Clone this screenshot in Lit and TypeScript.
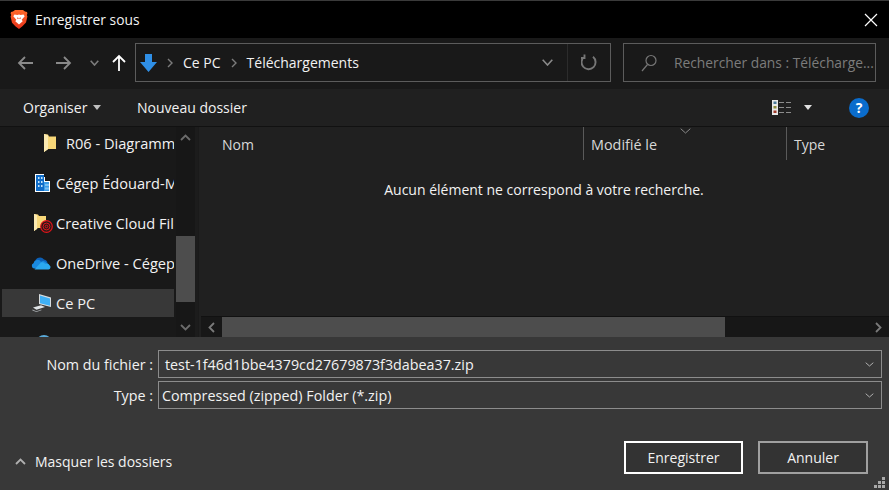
import { LitElement, html, css } from "lit";
import { customElement } from "lit/decorators.js";

const chev = (w = 11, h = 6, c = "#8a8a8a", sw = 1.4) => html`<svg width=${w} height=${h} viewBox="0 0 ${w} ${h}"><path d="M.7 .7L${w / 2} ${h - 1}L${w - 0.7} .7" fill="none" stroke=${c} stroke-width=${sw}/></svg>`;

const brave = html`<svg width="18" height="21" viewBox="0 0 18 21"><defs><linearGradient id="b" x1="0" y1="0" x2="0" y2="1"><stop offset="0" stop-color="#ff6a2a"/><stop offset="1" stop-color="#e5301a"/></linearGradient></defs><path d="M5 1h8l2 1.600 2 .4.4 1.400-.6 1.600.6 1.600-1.400 6-3.600 3.600L9 20 5.600 17.500 2 13.700.6 7.600 1.200 6 .6 4.400 1 3l2-.4z" fill="url(#b)"/><path d="M4.500 5.500l3 .5 1.500-.6 1.500.6 3-.5 1.200 1.800-3 3.500 1 1.400-3.700 3.300-3.700-3.300 1-1.400-3-3.500z" fill="#fff"/><path d="M7 9l1.600.4M11 9l-1.600.4" stroke="#f04a22" stroke-width="1"/></svg>`;

const folder = html`<svg width="12" height="18" viewBox="0 0 12 18"><path d="M0 0l4 .6 1 2h7V15H4l-4 3z" fill="#f7d778"/><path d="M0 0l4 1.200v14L0 18z" fill="#fbe9b0"/></svg>`;

const building = html`<svg width="15" height="18" viewBox="0 0 15 18"><path d="M0 0h9v3h1v4h5v11H0z" fill="#fff"/><path d="M1 1h8v16H1z" fill="#0f6cc8"/><path d="M9 8h5v9H9z" fill="#3b9de8"/><g fill="#bfe2fa"><path d="M3 3h1.500v2H3zM6 3h1.500v2H6zM3 7h1.500v2H3zM6 7h1.500v2H6zM3 11h1.500v2H3zM6 11h1.500v2H6zM10.500 10h1v2h-1zM12.500 10h1v2h-1zM10.500 13.500h1v2h-1zM12.500 13.500h1v2h-1z"/></g></svg>`;

const cc = html`<svg width="19" height="19" viewBox="0 0 19 19"><path d="M0 0l4 .5L5 2h7v12H4l-4 3z" fill="#f7d778"/><path d="M0 0l3 1v14l-3 2z" fill="#fbe9b0"/><circle cx="12.500" cy="12.500" r="5.800" fill="#2a1a18" stroke="#e0141a" stroke-width="1.200"/><circle cx="12.500" cy="12.500" r="3.400" fill="none" stroke="#e0141a"/><circle cx="12.500" cy="12.500" r="1.300" fill="none" stroke="#e0141a"/></svg>`;

const cloud = html`<svg width="20" height="13" viewBox="0 0 20 13"><path d="M4 5a5 5 0 0 1 9-2.500A4 4 0 0 1 16.500 7H5z" fill="#0c5fb5"/><path d="M2.500 6.200A4 4 0 0 1 10 5a3.500 3.500 0 0 1 5.500 1L9 11.500H3A2.800 2.800 0 0 1 2.500 6.200z" fill="#1a8ae0"/><path d="M9 6.500a3 3 0 0 1 5 .3 3 3 0 0 1 4.500 1.500 2.300 2.300 0 0 1 -1 4.200H3.500z" fill="#2ba8ef"/></svg>`;

const pc = html`<svg width="20" height="18" viewBox="0 0 20 18"><path d="M7 0l12 3.500v9.500L7 10z" fill="#d8dde0"/><path d="M8 1.400l10 3v7.300L8 9.200z" fill="#3fb0f5"/><path d="M1 13.500l8-2.200 4 1.600-8.500 2.800z" fill="#dfe3e6"/><path d="M.4 15.500l4 1.800 5-1.800v.8l-5 1.700-4-1.600z" fill="#a8acb0"/></svg>`;

const globe = html`<svg width="16" height="16" viewBox="0 0 16 16"><circle cx="8" cy="8" r="8" fill="#5aa9d8"/><path d="M3 2c3 1 6-1 9 1-1 2-3 1-4 3-2 0-4-1-5-4z" fill="#d4e8f2"/></svg>`;

const viewIcon = html`<svg width="19" height="15" viewBox="0 0 19 15"><path d="M0 0h6v15H0z" fill="#e8e8e8"/><path d="M1.500 1.500h3v2.500h-3z" fill="#4a7a9a"/><path d="M1.500 6h3v2.500h-3z" fill="#8a8a3a"/><path d="M1.500 10.500h3v2.500h-3z" fill="#a03a2a"/><path d="M7 2.500h5M14 2.500h5M7 7.500h5M14 7.500h5M7 12.500h5M14 12.500h5" stroke="#8c8c8c" stroke-width="1"/></svg>`;

const rows: [unknown, string, boolean, number, number][] = [
  [folder, "R06 - Diagramme", false, 44, 66],
  [building, "Cégep Édouard-Montpetit", false, 35, 56],
  [cc, "Creative Cloud Files", false, 34, 56],
  [cloud, "OneDrive - Cégep", false, 31, 56],
  [pc, "Ce PC", true, 32, 56],
  [globe, "Réseau", false, 36, 56],
];

@customElement("app-root")
export class AppRoot extends LitElement {
  static styles = css`
    :host { display: block; width: 889px; height: 490px; overflow: hidden; }
    * { box-sizing: border-box; }
    svg { flex: none; }
    .win { width: 889px; height: 490px; display: flex; flex-direction: column; font-family: "Open Sans", "Noto Sans", sans-serif; font-size: 14px; color: #f2f2f2; background: #383838; }
    .title { height: 38px; flex: none; background: #000; border-top: 1px solid #3a3a3a; display: flex; align-items: center; padding: 0 11px 0 10px; }
    .title .t { margin-left: 7px; flex: 1; font-size: 13.800px; }
    .nav { height: 51px; flex: none; background: #191919; display: flex; align-items: center; padding: 0 13px 2px 16px; }
    .navbtn { display: flex; align-items: center; justify-content: center; flex: none; }
    .navbtn.back { width: 19px; }
    .navbtn.fwd { width: 19px; margin-left: 19px; }
    .navbtn.dd { width: 13px; margin-left: 14.500px; }
    .navbtn.up { width: 16px; margin-left: 10.500px; }
    .crumb { width: 476px; height: 39px; margin-left: 8px; border: 1px solid #5c5c5c; display: flex; align-items: center; background: #191919; }
    .crumb .dl { margin-left: 4px; }
    .sep { margin: 0 10px; display: flex; }
    .crumb .grow { flex: 1; }
    .divider { width: 1px; height: 37px; background: #2c2c2c; margin-left: 14px; }
    .refresh { width: 42px; display: flex; justify-content: center; }
    .search { width: 253px; height: 39px; margin-left: 12px; border: 1px solid #5c5c5c; display: flex; align-items: center; padding-left: 17px; color: #7c7c7c; white-space: nowrap; overflow: hidden; }
    .search span { margin-left: 17px; font-size: 13.800px; }
    .tools { height: 38px; flex: none; background: #202020; border-bottom: 1px solid #111; display: flex; align-items: center; padding: 0 20px 0 23px; }
    .org { display: flex; align-items: center; gap: 6px; width: 114px; }
    .grow { flex: 1; }
    .caret { width: 0; height: 0; border-left: 4.500px solid transparent; border-right: 4.500px solid transparent; border-top: 5px solid #c0c0c0; display: block; }
    .tools .caret.v { margin: 0 37px 0 13px; border-top-color: #e0e0e0; }
    .help { width: 20px; height: 20px; border-radius: 50%; background: #0a6ccc; color: #fff; font-size: 14px; font-weight: 700; display: flex; align-items: center; justify-content: center; line-height: 1; }
    .main { height: 210px; flex: none; display: flex; background: #202020; }
    .side { width: 198px; flex: none; display: flex; background: #191919; border-right: 3px solid #1c1c1c; }
    .tree { width: 176px; flex: none; padding: 2px 0 0 2px; display: flex; flex-direction: column; gap: 12px; overflow: hidden; height: 210px; font-size: 14.600px; }
    .row { height: 28px; width: 172px; flex: none; display: flex; align-items: center; white-space: nowrap; overflow: hidden; }
    .row.sel { background: #383838; }
    .row .ic { flex: none; display: flex; align-items: center; justify-content: flex-start; }
    .row .lbl { overflow: hidden; }
    .vbar { width: 19px; flex: none; display: flex; flex-direction: column; align-items: center; background: #171717; }
    .vbar .up { height: 109px; flex: none; display: flex; align-items: flex-start; justify-content: center; padding-top: 7px; width: 100%; }
    .vbar .thumb { height: 66px; width: 100%; flex: none; background: #4d4d4d; }
    .vbar .dn { flex: 1; display: flex; align-items: center; justify-content: center; padding-top: 15px; }
    .content { flex: 1; display: flex; flex-direction: column; min-width: 0; border-left: 1px solid #1a1a1a; }
    .head { height: 33px; flex: none; display: flex; align-items: stretch; position: relative; color: #d8d8d8; }
    .h { display: flex; align-items: center; padding-top: 2px; }
    .h.nom { width: 384px; padding-left: 23px; }
    .h.mod { width: 203px; padding-left: 7px; border-left: 1px solid #5a5a5a; font-size: 14.400px; }
    .h.typ { flex: 1; padding-left: 7px; border-left: 1px solid #5a5a5a; }
    .sort { position: absolute; left: 481px; top: 1px; display: flex; }
    .empty { flex: 1; text-align: center; padding-top: 20px; font-size: 14px; color: #f2f2f2; }
    .hbar { height: 21px; flex: none; display: flex; align-items: stretch; margin-left: 2px; background: #171717; border-top: 1px solid #111; }
    .hbar .b { width: 21px; flex: none; display: flex; align-items: center; justify-content: center; }
    .hbar .th { width: 503px; flex: none; background: #4d4d4d; }
    .hbar .fill { flex: 1; }
    .bottom { flex: 1; display: flex; flex-direction: column; padding: 13px 7px 0 0; position: relative; }
    .field { height: 28px; display: flex; align-items: center; margin-bottom: 3px; font-size: 14.300px; }
    .field label { width: 153px; flex: none; text-align: right; }
    .inp { margin-left: 5px; flex: 1; height: 28px; border: 1px solid #8c8c8c; display: flex; align-items: center; padding: 0 7px 0 6px; }
    .inp.b { padding-left: 3px; }
    .inp span { flex: 1; }
    .foot { display: flex; align-items: center; margin-top: 29px; padding-left: 15px; padding-right: 14px; }
    .hide { display: flex; align-items: center; gap: 9px; flex: 1; padding-top: 8px; }
    .btn { height: 33px; border: 2px solid #fff; background: #333; display: flex; align-items: center; justify-content: center; }
    .btn.s { width: 119px; margin-right: 15px; }
    .btn.c { width: 110px; border-color: #a0a0a0; }
    .grip { position: absolute; right: 4px; bottom: 2px; display: flex; }
  `;

  render() {
    const crumbSep = html`<span class="sep"><svg width="6" height="10" viewBox="0 0 6 10"><path d="M1 1l4 4-4 4" fill="none" stroke="#7c7c7c" stroke-width="1.400"/></svg></span>`;
    return html`<div class="win">
      <div class="title">${brave}<span class="t">Enregistrer sous</span>
        <svg width="14" height="14" viewBox="0 0 14 14"><path d="M1 1l12 12M13 1L1 13" stroke="#fff" stroke-width="1.200"/></svg>
      </div>
      <div class="nav">
        <span class="navbtn back"><svg width="17" height="14" viewBox="0 0 17 14"><path d="M16 7H2M8 1L2 7l6 6" fill="none" stroke="#8a8a8a" stroke-width="1.800"/></svg></span>
        <span class="navbtn fwd"><svg width="17" height="14" viewBox="0 0 17 14"><path d="M1 7h14M9 1l6 6-6 6" fill="none" stroke="#8a8a8a" stroke-width="1.800"/></svg></span>
        <span class="navbtn dd">${chev(9, 6, "#7c7c7c", 1.600)}</span>
        <span class="navbtn up"><svg width="14" height="17" viewBox="0 0 14 17"><path d="M7 17V2M1 8l6-6 6 6" fill="none" stroke="#fff" stroke-width="1.800"/></svg></span>
        <div class="crumb">
          <svg class="dl" width="17" height="18" viewBox="0 0 17 18"><path d="M5 0h7v8h5l-8.500 10L0 8h5z" fill="#2f8fe6"/></svg>
          ${crumbSep}
          <span>Ce PC</span>
          ${crumbSep}
          <span>Téléchargements</span>
          <span class="grow"></span>
          ${chev(11, 7, "#8a8a8a", 1.600)}
          <span class="divider"></span>
          <span class="refresh"><svg width="16" height="17" viewBox="0 0 16 17"><path d="M3.500 2.500A7 7 0 1 0 12 2.800M3.500 .5v3.500H0" fill="none" stroke="#767676" stroke-width="1.900"/></svg></span>
        </div>
        <div class="search">
          <svg width="16" height="18" viewBox="0 0 16 18"><circle cx="10" cy="6.500" r="5" fill="none" stroke="#767676" stroke-width="1.200"/><path d="M6.500 10.500L1 17" stroke="#767676" stroke-width="1.200"/></svg>
          <span>Rechercher dans : Télécharge...</span>
        </div>
      </div>
      <div class="tools">
        <div class="org"><span>Organiser</span><i class="caret"></i></div>
        <span>Nouveau dossier</span>
        <span class="grow"></span>
        ${viewIcon}<i class="caret v"></i><span class="help">?</span>
      </div>
      <div class="main">
        <div class="side">
          <div class="tree">
            ${rows.map(([ic, label, sel, iconX, labelX]) => html`<div class="row ${sel ? "sel" : ""}" style="padding-left:${iconX - 2}px"><span class="ic" style="width:${labelX - iconX}px">${ic}</span><span class="lbl">${label}</span></div>`)}
          </div>
          <div class="vbar">
            <div class="up"><svg width="11" height="7" viewBox="0 0 11 7"><path d="M1 6l4.500-4.500L10 6" fill="none" stroke="#6c6c6c" stroke-width="1.800"/></svg></div>
            <div class="thumb"></div>
            <div class="dn"><svg width="11" height="7" viewBox="0 0 11 7"><path d="M1 1l4.500 4.500L10 1" fill="none" stroke="#6c6c6c" stroke-width="1.800"/></svg></div>
          </div>
        </div>
        <div class="content">
          <div class="head">
            <div class="h nom">Nom</div><div class="h mod">Modifié le</div><div class="h typ">Type</div>
            <span class="sort">${chev(11, 6, "#8a8a8a", 1)}</span>
          </div>
          <div class="empty">Aucun élément ne correspond à votre recherche.</div>
          <div class="hbar">
            <div class="b"><svg width="7" height="11" viewBox="0 0 7 11"><path d="M6 1L1.500 5.500 6 10" fill="none" stroke="#7a7a7a" stroke-width="1.800"/></svg></div>
            <div class="th"></div><div class="fill"></div>
            <div class="b"><svg width="7" height="11" viewBox="0 0 7 11"><path d="M1 1l4.500 4.500L1 10" fill="none" stroke="#7a7a7a" stroke-width="1.800"/></svg></div>
          </div>
        </div>
      </div>
      <div class="bottom">
        <div class="field"><label>Nom du fichier :</label><div class="inp a"><span>test-1f46d1bbe4379cd27679873f3dabea37.zip</span>${chev(9, 5, "#b0b0b0", 1)}</div></div>
        <div class="field"><label>Type :</label><div class="inp b"><span>Compressed (zipped) Folder (*.zip)</span>${chev(9, 5, "#b0b0b0", 1)}</div></div>
        <div class="foot">
          <div class="hide"><svg width="11" height="7" viewBox="0 0 11 7"><path d="M1 6l4.500-4.500L10 6" fill="none" stroke="#b0b0b0" stroke-width="1.800"/></svg><span>Masquer les dossiers</span></div>
          <div class="btn s">Enregistrer</div><div class="btn c">Annuler</div>
        </div>
        <span class="grip"><svg width="11" height="11" viewBox="0 0 11 11" fill="#a8a8a8"><path d="M8 0h3v3H8zM4 4h3v3H4zM8 4h3v3H8zM0 8h3v3H0zM4 8h3v3H4zM8 8h3v3H8z"/></svg></span>
      </div>
    </div>`;
  }
}
